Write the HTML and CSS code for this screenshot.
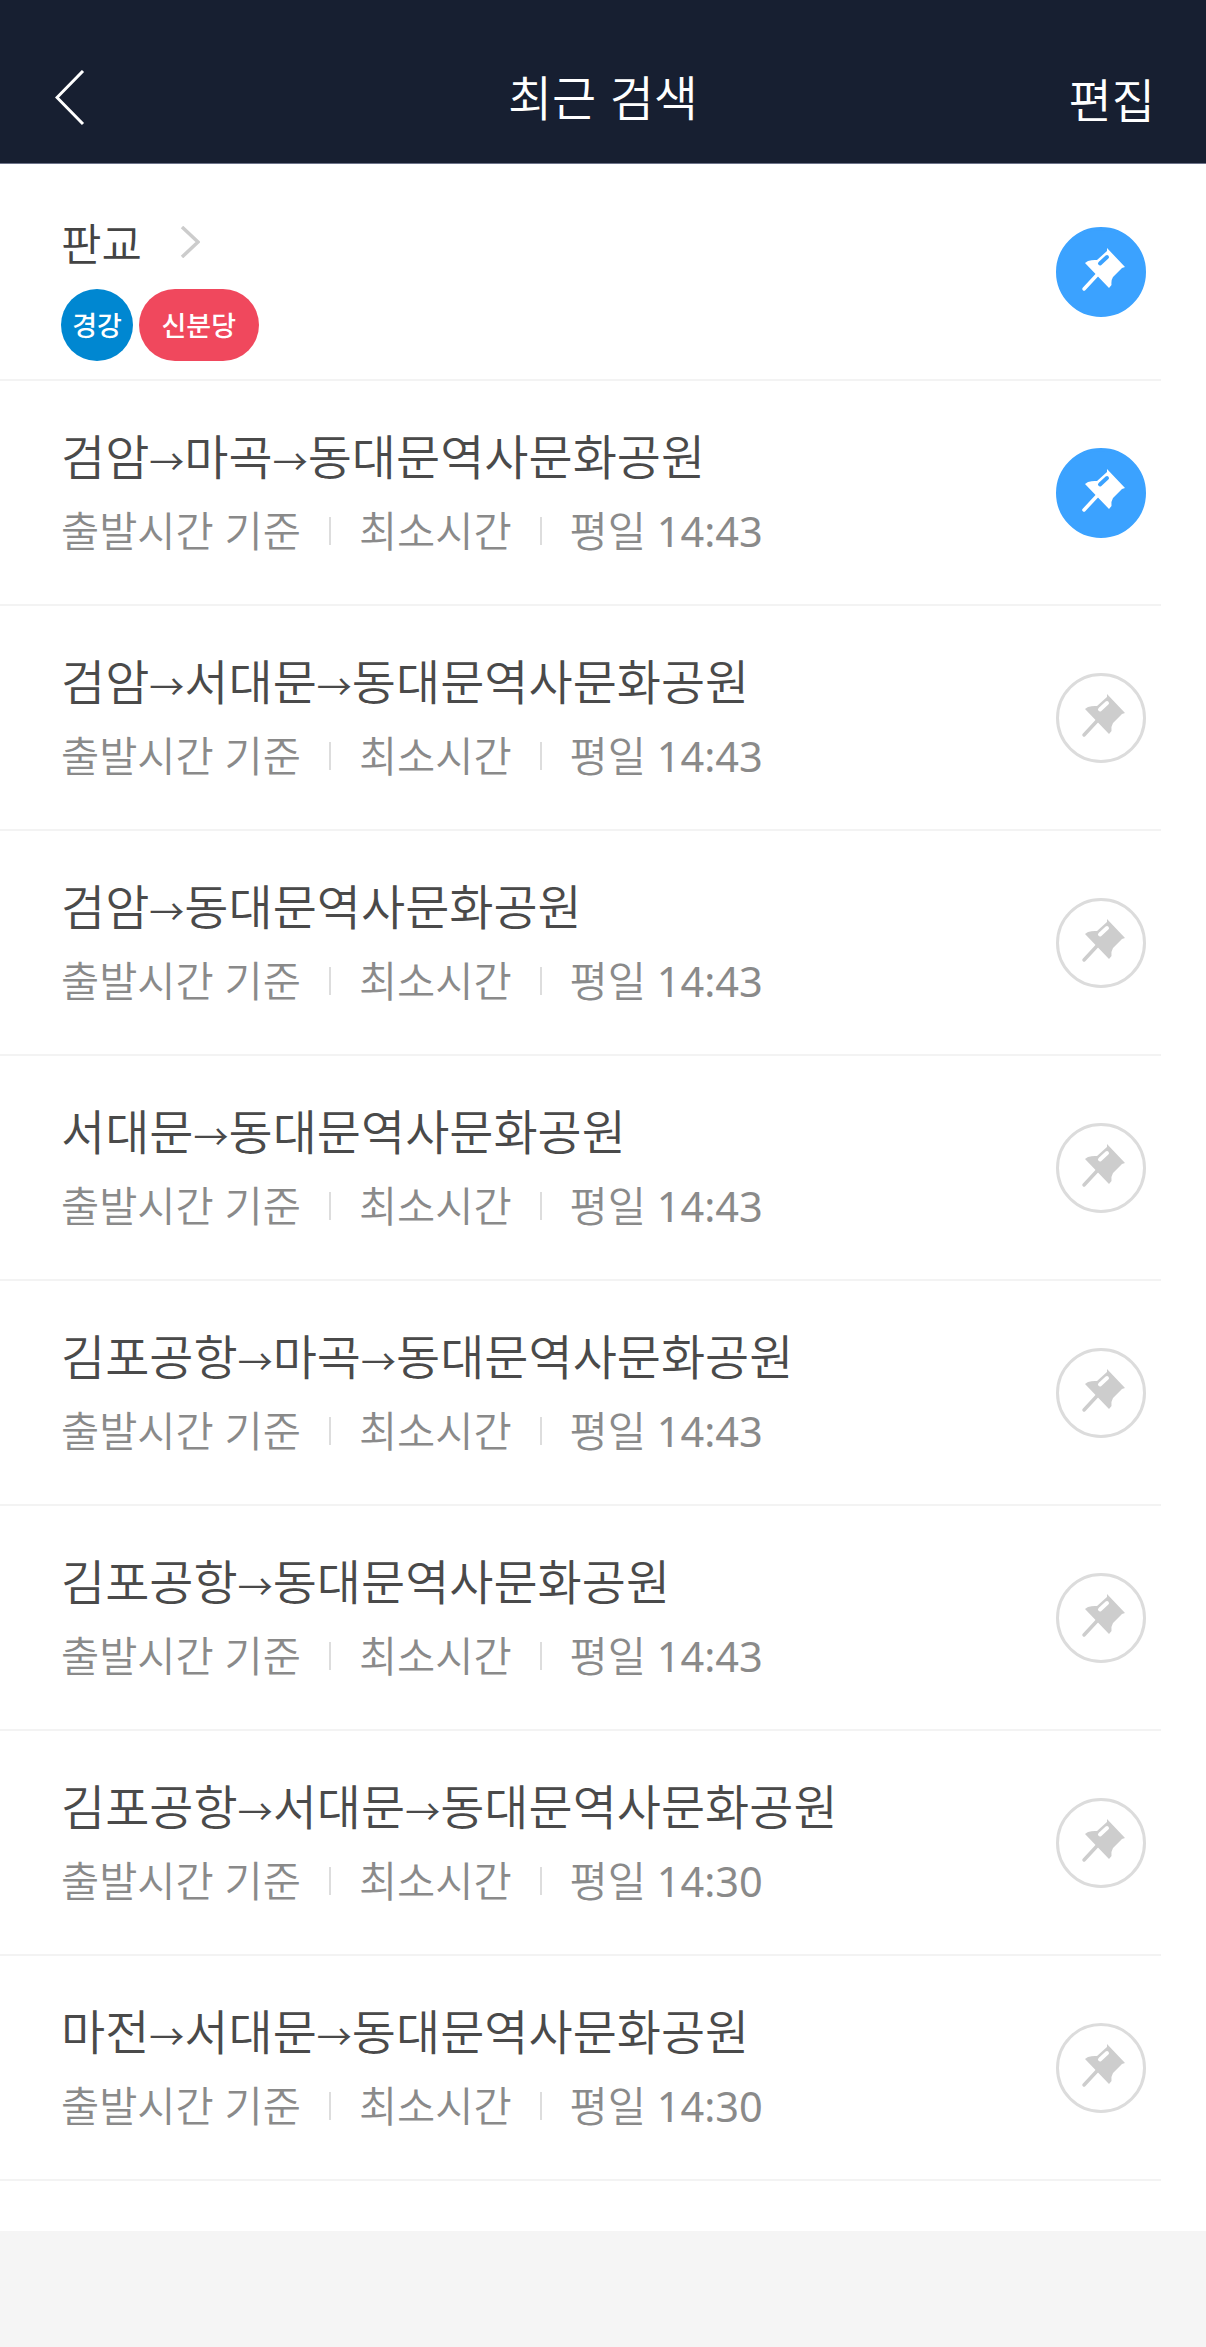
FILE: index.html
```html
<!DOCTYPE html>
<html lang="ko">
<head>
  <meta charset="UTF-8">
  <meta name="viewport" content="width=device-width, initial-scale=1.0">
  <title>최근 검색</title>
  <link rel="stylesheet" href="styles.css">
</head>
<body>
  <svg class="defs" width="0" height="0">
    <symbol id="pin" viewBox="0 0 90 90">
      <path class="pin-needle" d="M28 62 L41 48"/>
      <path class="pin-head" d="M51 21 L69 40 L66 41 L57 50 Q55 53 55.500 58 L53 61 L29 36 L32 34 Q37 32.500 41 33 L51 24 Z"/>
      <path class="pin-slot" d="M44 36.500 L51 30"/>
    </symbol>
  </svg>

  <header class="topbar">
    <svg class="back" width="30" height="56" viewBox="0 0 30 56"><path d="M28 1 L2 27.500 L28 54"/></svg>
    <h1>최근 검색</h1>
    <span class="edit">편집</span>
  </header>

  <main class="list">
    <div class="row row-station">
      <div class="info">
        <div class="station-name">
          <span>판교</span>
          <svg class="more" width="20" height="32" viewBox="0 0 20 32"><path d="M2 1 L18 16 L2 31"/></svg>
        </div>
        <div class="lines">
          <span class="line line-gyeonggang">경강</span>
          <span class="line line-sinbundang">신분당</span>
        </div>
      </div>
      <button class="pin-btn on"><svg width="90" height="90"><use href="#pin"/></svg></button>
    </div>

    <div class="row">
      <div class="info">
        <div class="route">검암<span class="arrow">→</span>마곡<span class="arrow">→</span>동대문역사문화공원</div>
        <div class="meta"><span>출발시간 기준</span><i></i><span>최소시간</span><i></i><span>평일 <span class="time">14:43</span></span></div>
      </div>
      <button class="pin-btn on"><svg width="90" height="90"><use href="#pin"/></svg></button>
    </div>

    <div class="row">
      <div class="info">
        <div class="route">검암<span class="arrow">→</span>서대문<span class="arrow">→</span>동대문역사문화공원</div>
        <div class="meta"><span>출발시간 기준</span><i></i><span>최소시간</span><i></i><span>평일 <span class="time">14:43</span></span></div>
      </div>
      <button class="pin-btn"><svg width="90" height="90"><use href="#pin"/></svg></button>
    </div>

    <div class="row">
      <div class="info">
        <div class="route">검암<span class="arrow">→</span>동대문역사문화공원</div>
        <div class="meta"><span>출발시간 기준</span><i></i><span>최소시간</span><i></i><span>평일 <span class="time">14:43</span></span></div>
      </div>
      <button class="pin-btn"><svg width="90" height="90"><use href="#pin"/></svg></button>
    </div>

    <div class="row">
      <div class="info">
        <div class="route">서대문<span class="arrow">→</span>동대문역사문화공원</div>
        <div class="meta"><span>출발시간 기준</span><i></i><span>최소시간</span><i></i><span>평일 <span class="time">14:43</span></span></div>
      </div>
      <button class="pin-btn"><svg width="90" height="90"><use href="#pin"/></svg></button>
    </div>

    <div class="row">
      <div class="info">
        <div class="route">김포공항<span class="arrow">→</span>마곡<span class="arrow">→</span>동대문역사문화공원</div>
        <div class="meta"><span>출발시간 기준</span><i></i><span>최소시간</span><i></i><span>평일 <span class="time">14:43</span></span></div>
      </div>
      <button class="pin-btn"><svg width="90" height="90"><use href="#pin"/></svg></button>
    </div>

    <div class="row">
      <div class="info">
        <div class="route">김포공항<span class="arrow">→</span>동대문역사문화공원</div>
        <div class="meta"><span>출발시간 기준</span><i></i><span>최소시간</span><i></i><span>평일 <span class="time">14:43</span></span></div>
      </div>
      <button class="pin-btn"><svg width="90" height="90"><use href="#pin"/></svg></button>
    </div>

    <div class="row">
      <div class="info">
        <div class="route">김포공항<span class="arrow">→</span>서대문<span class="arrow">→</span>동대문역사문화공원</div>
        <div class="meta"><span>출발시간 기준</span><i></i><span>최소시간</span><i></i><span>평일 <span class="time">14:30</span></span></div>
      </div>
      <button class="pin-btn"><svg width="90" height="90"><use href="#pin"/></svg></button>
    </div>

    <div class="row">
      <div class="info">
        <div class="route">마전<span class="arrow">→</span>서대문<span class="arrow">→</span>동대문역사문화공원</div>
        <div class="meta"><span>출발시간 기준</span><i></i><span>최소시간</span><i></i><span>평일 <span class="time">14:30</span></span></div>
      </div>
      <button class="pin-btn"><svg width="90" height="90"><use href="#pin"/></svg></button>
    </div>
  </main>
</body>
</html>
```

FILE: styles.css
```css
* {
  box-sizing: border-box;
}
html, body {
  height: 100%;
}
body {
  margin: 0;
  background-color: #f5f5f5;
  font-family: "Noto Sans CJK KR", "Noto Sans", sans-serif;
}
.defs {
  display: block;
  height: 0;
}
.topbar {
  position: relative;
  height: 164px;
  padding: 32px 51px 0 55px;
  display: flex;
  align-items: center;
  justify-content: space-between;
  background-color: #171f31;
  border-bottom: 1px solid #6d7389;
  color: #fff;
}
.topbar h1 {
  position: absolute;
  left: 0;
  right: 0;
  bottom: 35px;
  margin: 0;
  text-align: center;
  font-size: 48px;
  line-height: 66px;
  font-weight: 350;
}
.back path, .more path {
  fill: none;
  stroke-width: 3;
}
.back path {
  stroke: #fff;
}
.more path {
  stroke: #ccc;
  stroke-width: 3.500;
}
.edit {
  font-size: 47px;
  line-height: 66px;
  font-weight: 350;
}
.list {
  background-color: #fff;
  padding-bottom: 50px;
}
.row {
  height: 225px;
  padding-left: 61px;
  margin-right: 45px;
  display: flex;
  align-items: center;
  justify-content: space-between;
  border-bottom: 2px solid #f3f3f3;
}
.row-station {
  height: 217px;
}
.row-station .info {
  padding-top: 28px;
}
.pin-btn {
  width: 90px;
  height: 90px;
  margin-right: 15px;
  padding: 0;
  border: 3px solid #dcdcdc;
  border-radius: 50%;
  background-color: #fff;
  color: #cdcdcd;
  --slot: #fff;
  position: relative;
}
.pin-btn svg {
  position: absolute;
  left: -3px;
  top: -3px;
}
.pin-btn.on {
  border-color: #3ba2ff;
  background-color: #3ba2ff;
  color: #fff;
  --slot: #3ba2ff;
}
.pin-head {
  fill: currentColor;
}
.pin-needle {
  fill: none;
  stroke: currentColor;
  stroke-width: 3.500;
  stroke-linecap: round;
}
.pin-slot {
  fill: none;
  stroke: var(--slot);
  stroke-width: 4;
  stroke-linecap: round;
}
.route {
  font-size: 48px;
  line-height: 66px;
  font-weight: 350;
  color: #4a4a4a;
  margin-top: -4px;
  margin-bottom: 8px;
}
.arrow {
  font-size: 35px;
  font-weight: 400;
}
.meta {
  display: flex;
  align-items: center;
  font-family: "Noto Sans", "Noto Sans CJK KR", sans-serif;
  font-size: 41.500px;
  line-height: 60px;
  font-weight: 350;
  color: #8a8a8a;
}
.time {
  font-weight: 400;
}
.meta i {
  width: 2px;
  height: 28px;
  margin: 0 28px;
  background-color: #ddd;
}
.station-name {
  display: flex;
  align-items: center;
  gap: 38px;
  font-size: 44px;
  line-height: 64px;
  font-weight: 350;
  color: #444;
}
.lines {
  display: flex;
  gap: 6px;
  margin-top: 15px;
}
.line {
  height: 72px;
  min-width: 72px;
  padding: 0 22.500px;
  border-radius: 36px;
  color: #fff;
  font-size: 27px;
  font-weight: 500;
  line-height: 72px;
  text-align: center;
}
.line-gyeonggang {
  padding: 0 5px;
  background-color: #0087d1;
}
.line-sinbundang {
  background-color: #f0485d;
}
```
